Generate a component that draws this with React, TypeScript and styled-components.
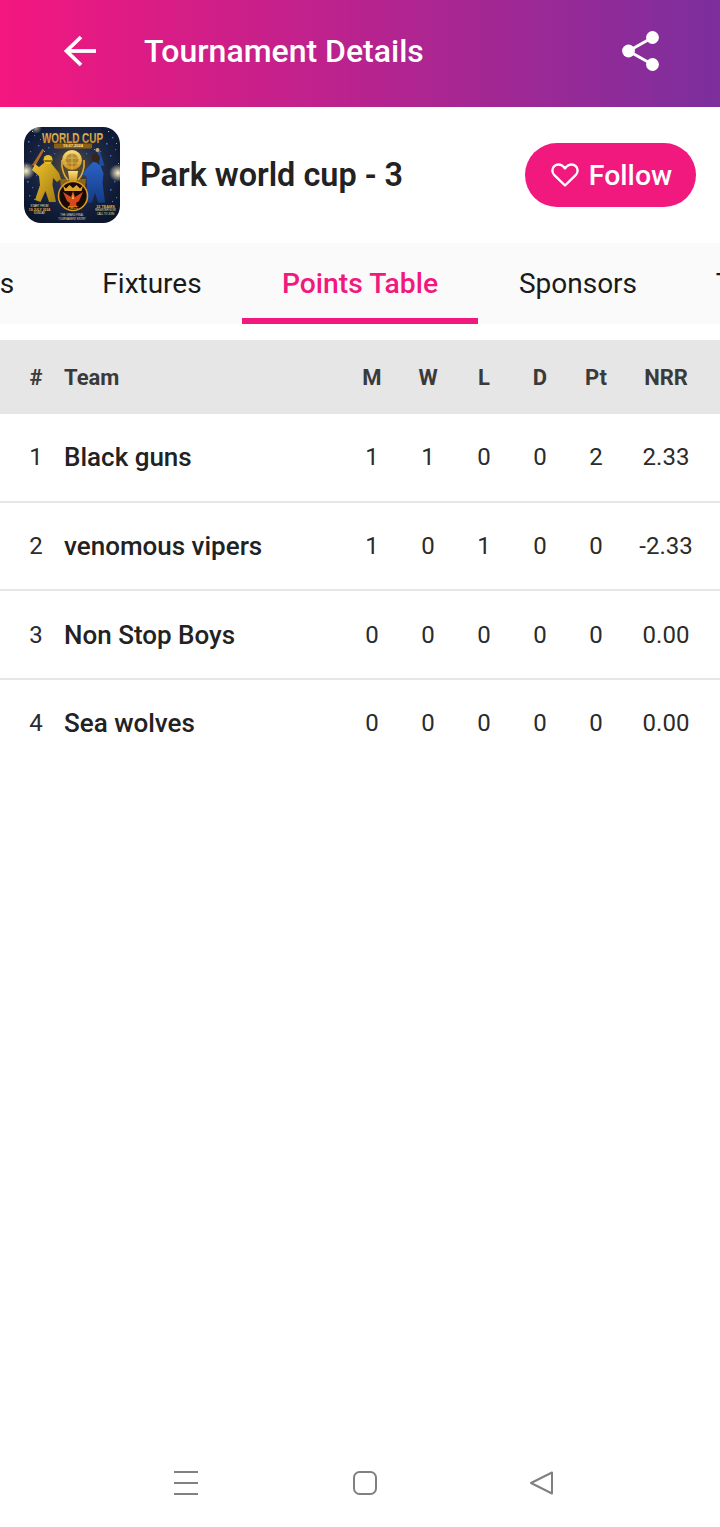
import * as React from 'react';
import styled, { createGlobalStyle } from 'styled-components';

const tabs = [
  { label: 'Matches', width: 204 },
  { label: 'Fixtures', width: 180 },
  { label: 'Points Table', width: 236, active: true },
  { label: 'Sponsors', width: 200 },
  { label: 'Teams', width: 160 },
];

const columns = ['M', 'W', 'L', 'D', 'Pt', 'NRR'];

const teams = [
  { name: 'Black guns', stats: ['1', '1', '0', '0', '2', '2.33'] },
  { name: 'venomous vipers', stats: ['1', '0', '1', '0', '0', '-2.33'] },
  { name: 'Non Stop Boys', stats: ['0', '0', '0', '0', '0', '0.00'] },
  { name: 'Sea wolves', stats: ['0', '0', '0', '0', '0', '0.00'] },
];

// confetti specks of the poster: x, y, size
const blueSpecks = [
  [4, 14, 1.6], [10, 8, 1.2], [14, 18, 1.4], [6, 24, 1.2], [88, 10, 1.4], [82, 16, 1.6],
  [91, 22, 1.2], [86, 28, 1.4], [76, 24, 1.2], [30, 26, 1.2], [24, 20, 1.4], [62, 26, 1.2],
  [3, 54, 1.6], [8, 60, 1.2], [5, 68, 1.4], [90, 54, 1.4], [86, 62, 1.6], [92, 70, 1.2],
  [58, 47, 1.1], [34, 50, 1.1], [60, 58, 1.2], [88, 42, 1.2], [12, 48, 1.2],
];
const goldSpecks = [
  [8, 4, 1], [20, 24, 0.9], [84, 4, 1.1], [92, 16, 0.9], [70, 22, 0.9], [16, 12, 0.8],
  [2, 38, 0.9], [94, 36, 0.9], [28, 46, 0.8], [64, 50, 0.8], [10, 72, 0.8], [88, 74, 0.8],
];

const TournamentArt = () => (
  <svg width="96" height="96" viewBox="0 0 96 96">
    <defs>
      <radialGradient id="sky" cx="50%" cy="42%" r="72%">
        <stop offset="0%" stopColor="#6a5526" />
        <stop offset="32%" stopColor="#27304a" />
        <stop offset="70%" stopColor="#101c38" />
        <stop offset="100%" stopColor="#0a1224" />
      </radialGradient>
      <radialGradient id="flare">
        <stop offset="0%" stopColor="#fff3c8" />
        <stop offset="100%" stopColor="#fff3c8" stopOpacity="0" />
      </radialGradient>
      <linearGradient id="gold" x1="0" y1="0" x2="0" y2="1">
        <stop offset="0%" stopColor="#fbe07a" />
        <stop offset="100%" stopColor="#c98a1c" />
      </linearGradient>
      <linearGradient id="kit" x1="0" y1="0" x2="1" y2="1">
        <stop offset="0%" stopColor="#f0c52c" />
        <stop offset="100%" stopColor="#9b7410" />
      </linearGradient>
      <linearGradient id="blueKit" x1="0" y1="0" x2="0" y2="1">
        <stop offset="0%" stopColor="#2a63c4" />
        <stop offset="100%" stopColor="#143a86" />
      </linearGradient>
    </defs>
    <rect width="96" height="96" fill="url(#sky)" />
    <circle cx="2" cy="44" r="9" fill="url(#flare)" />
    <circle cx="94" cy="46" r="9" fill="url(#flare)" />
    <circle cx="12" cy="1" r="6" fill="url(#flare)" opacity="0.6" />
    {blueSpecks.map(([x, y, s]) => (
      <rect key={`${x}-${y}`} x={x} y={y} width={s} height={s} fill="#2f78e0" />
    ))}
    {goldSpecks.map(([x, y, s]) => (
      <rect key={`${x}-${y}`} x={x} y={y} width={s} height={s} fill="#f0c040" />
    ))}

    <text x="48.500" y="15.500" textAnchor="middle" fontFamily="'Liberation Sans', sans-serif" fontSize="15" fontWeight="700" fill="url(#gold)" stroke="#7a4c0c" strokeWidth="0.250" textLength="61" lengthAdjust="spacingAndGlyphs">WORLD CUP</text>
    <rect x="30" y="16.500" width="38" height="5" rx="1" fill="#8a5f16" />
    <text x="49" y="20.400" textAnchor="middle" fontFamily="'Liberation Sans', sans-serif" fontSize="4" fontWeight="700" fill="#ffe9a0">19.07.2024</text>

    {/* trophy */}
    <path d="M36 52h26l-2 16H38z" fill="#8d6316" />
    <path d="M38 33c-1 8 2 16 6 20M60 33c1 8-2 16-6 20" stroke="#e2ac32" strokeWidth="1.600" fill="none" />
    <path d="M44 44h10l-1.500 12h-7z" fill="url(#gold)" />
    <circle cx="48" cy="33" r="10" fill="url(#gold)" />
    <circle cx="48" cy="33" r="6.500" fill="#8a5f16" opacity="0.55" />
    <path d="M40 31h16M41 36h14M48 24v18" stroke="#f6d873" strokeWidth="0.500" />

    {/* yellow batter */}
    <path d="M7 38l1.800-1 9.500-15 2 1.100-9 15.900z" fill="#b06a2c" />
    <path d="M11 37l4 3 6-5 6 1 8 10 2 6-4 3-4-4-.500 7 3.500 17h-7l-3.500-11-5 11-5.500-2 5-15-1-9-7-6z" fill="url(#kit)" />
    <circle cx="24" cy="32.500" r="4.500" fill="#e9bd24" />
    <path d="M20 33h9l-1 2h-7z" fill="#8a6a10" />

    {/* blue bowler */}
    <path d="M62 42l7-7 3 .500 4.500 3 3 8-1 9 2.500 20h-7l-3-10-3 10h-6l1-17-.500-9-3.500-2z" fill="url(#blueKit)" />
    <path d="M76 39l-3-15 2.500-.500 5 15z" fill="#1d4fa3" />
    <circle cx="72" cy="31" r="4" fill="#3a2418" />
    <circle cx="73.500" cy="23" r="2" fill="#c9a878" />

    {/* emblem */}
    <circle cx="49" cy="69" r="14.500" fill="#180b05" stroke="#d79a26" strokeWidth="1.600" />
    <path d="M39 58.500l3 3 3.500-3.500 3.500 3 3.500-3 3.500 3.500 3-3-1.500 5.500H40.500z" fill="#e0a52c" />
    <path d="M49 64l2 6 8-5-4 9-3 2 1 4h-8l1-4-3-2-4-9 8 5z" fill="#d8481c" />
    <path d="M49 66l1 6h-2z" fill="#f5c23c" />
    <text x="49" y="81.500" textAnchor="middle" fontFamily="'Liberation Sans', sans-serif" fontSize="3.400" fontWeight="700" fill="#e0a52c">PWCC</text>

    {/* side captions */}
    <text x="15.500" y="79.500" textAnchor="middle" fontFamily="'Liberation Sans', sans-serif" fontSize="2.800" fill="#f3e3b0">START FROM</text>
    <text x="15.500" y="83.500" textAnchor="middle" fontFamily="'Liberation Sans', sans-serif" fontSize="3.400" fontWeight="700" fill="#e8b83a">19 JULY 2024</text>
    <text x="15.500" y="87" textAnchor="middle" fontFamily="'Liberation Sans', sans-serif" fontSize="2.800" fill="#f3e3b0">SUNDAY</text>
    <text x="81.500" y="80.500" textAnchor="middle" fontFamily="'Liberation Sans', sans-serif" fontSize="3.800" fontWeight="700" fill="#e8b83a">32 TEAMS</text>
    <text x="81.500" y="84" textAnchor="middle" fontFamily="'Liberation Sans', sans-serif" fontSize="2.600" fill="#f3e3b0">REGISTER NOW</text>
    <text x="81.500" y="87.500" textAnchor="middle" fontFamily="'Liberation Sans', sans-serif" fontSize="2.600" fill="#f3e3b0">CALL TO JOIN</text>
    <text x="48" y="88.500" textAnchor="middle" fontFamily="'Liberation Sans', sans-serif" fontSize="2.600" fill="#e6d8a8">THE GRAND FINAL</text>
    <text x="48" y="92.500" textAnchor="middle" fontFamily="'Liberation Sans', sans-serif" fontSize="2.600" fill="#e6d8a8">TOURNAMENT ENTRY</text>
  </svg>
);

const App = () => (
  <Page>
    <GlobalStyle />
    <AppBar>
      <IconSlot>
        <svg width="34" height="32" viewBox="0 0 34 32" fill="none" stroke="#fff" strokeWidth="3.800">
          <path d="M33 16H4" />
          <path d="M18 2 3.500 16 18 30" />
        </svg>
      </IconSlot>
      <Title>Tournament Details</Title>
      <ShareSlot>
        <svg width="38" height="40" viewBox="0 0 38 40" fill="#fff">
          <circle cx="30.500" cy="6.500" r="6.400" />
          <circle cx="6.500" cy="20" r="6.400" />
          <circle cx="30.500" cy="33.500" r="6.400" />
          <path d="M6.500 20 30.500 6.500M6.500 20l24 13.500" stroke="#fff" strokeWidth="3" />
        </svg>
      </ShareSlot>
    </AppBar>

    <Summary>
      <Logo>
        <TournamentArt />
      </Logo>
      <Name>Park world cup - 3</Name>
      <FollowButton>
        <svg width="28" height="24" viewBox="0 0 28 24" fill="none" stroke="#fff" strokeWidth="2.400" strokeLinejoin="round">
          <path d="M14 22.500 3.400 12.200C.6 9.400.8 5.200 3.400 3 6 .8 10 1 12.300 3.500L14 5.400l1.700-1.900C18 1 22 .8 24.600 3c2.600 2.200 2.800 6.400 0 9.200z" />
        </svg>
        Follow
      </FollowButton>
    </Summary>

    <TabStrip>
      <TabTrack>
        {tabs.map((tab) => (
          <Tab key={tab.label} $width={tab.width} $active={tab.active}>
            {tab.label}
          </Tab>
        ))}
      </TabTrack>
    </TabStrip>

    <Table>
      <HeadRow>
        <HeadCell>#</HeadCell>
        <HeadTeam>Team</HeadTeam>
        {columns.map((col) => (
          <HeadCell key={col}>{col}</HeadCell>
        ))}
      </HeadRow>
      {teams.map((team, i) => (
        <Row key={team.name} $last={i === teams.length - 1}>
          <Cell>{i + 1}</Cell>
          <TeamCell>{team.name}</TeamCell>
          {team.stats.map((value, j) => (
            <Cell key={j}>{value}</Cell>
          ))}
        </Row>
      ))}
    </Table>

    <NavBar>
      <svg width="24" height="24" viewBox="0 0 24 24" stroke="#808080" strokeWidth="2">
        <path d="M0 1h24M0 12h24M0 23h24" />
      </svg>
      <svg width="24" height="24" viewBox="0 0 24 24" fill="none" stroke="#808080" strokeWidth="2">
        <rect x="1" y="1" width="22" height="22" rx="5.500" />
      </svg>
      <svg width="24" height="24" viewBox="0 0 24 24" fill="none" stroke="#808080" strokeWidth="2" strokeLinejoin="round">
        <path d="M22 1.500v21L1 12z" />
      </svg>
    </NavBar>
  </Page>
);

const GlobalStyle = createGlobalStyle`
  html, body {
    margin: 0;
    padding: 0;
    background: #fff;
  }
  * {
    box-sizing: border-box;
  }
`;

const Page = styled.div`
  width: 720px;
  height: 1527px;
  display: flex;
  flex-direction: column;
  overflow: hidden;
  background: #fff;
  font-family: Roboto, 'Liberation Sans', sans-serif;
`;

const AppBar = styled.header`
  height: 107px;
  flex: none;
  display: flex;
  align-items: center;
  padding: 0 60px 5px 63px;
  background: linear-gradient(90deg, #f4177f 0%, #7c2f9d 100%);
  color: #fff;
`;

const IconSlot = styled.div`
  width: 81px;
  display: flex;
  align-items: center;
`;

const ShareSlot = styled.div`
  display: flex;
  align-items: center;
`;

const Title = styled.h1`
  flex: 1;
  margin: 0;
  font-size: 32px;
  font-weight: 500;
`;

const Summary = styled.section`
  height: 136px;
  flex: none;
  display: flex;
  align-items: center;
  padding: 0 24px;
`;

const Logo = styled.div`
  width: 96px;
  height: 96px;
  flex: none;
  border-radius: 17px;
  overflow: hidden;
  svg {
    display: block;
  }
`;

const Name = styled.h2`
  flex: 1;
  margin: 0 0 0 20px;
  font-size: 32.400px;
  font-weight: 600;
  color: #222;
`;

const FollowButton = styled.button`
  width: 171px;
  height: 64px;
  display: flex;
  align-items: center;
  justify-content: center;
  gap: 10px;
  padding: 0 0 0 2px;
  border: 0;
  border-radius: 32px;
  background: #f1187e;
  color: #fff;
  font-family: inherit;
  font-size: 28.500px;
  font-weight: 500;
`;

const TabStrip = styled.nav`
  height: 81px;
  flex: none;
  overflow: hidden;
  background: #fafafa;
`;

const TabTrack = styled.div`
  display: flex;
  height: 100%;
  margin-left: -142px;
`;

const Tab = styled.div<{ $width: number; $active?: boolean }>`
  flex: 0 0 ${(p) => p.$width}px;
  display: flex;
  align-items: center;
  justify-content: center;
  box-shadow: ${(p) => (p.$active ? 'inset 0 -6px 0 #f1187e' : 'none')};
  font-size: ${(p) => (p.$active ? 28.3 : 28)}px;
  font-weight: ${(p) => (p.$active ? 500 : 400)};
  color: ${(p) => (p.$active ? '#f1187e' : '#1a1a1a')};
`;

const Table = styled.section`
  margin-top: 16px;
  flex: 1;
`;

const gridColumns = '56px 280px repeat(5, 56px) 84px';

const HeadRow = styled.div`
  height: 74px;
  display: grid;
  grid-template-columns: ${gridColumns};
  align-items: center;
  padding-left: 8px;
  background: #e6e6e6;
`;

const HeadCell = styled.div`
  text-align: center;
  font-size: 22px;
  font-weight: 700;
  color: #3a3a3a;
`;

const HeadTeam = styled(HeadCell)`
  text-align: left;
`;

const Row = styled.div<{ $last?: boolean }>`
  height: 88.670px;
  display: grid;
  grid-template-columns: ${gridColumns};
  align-items: center;
  padding-left: 8px;
  border-bottom: 2px solid ${(p) => (p.$last ? 'transparent' : '#e6e6e6')};
`;

const Cell = styled.div`
  text-align: center;
  font-size: 24px;
  font-weight: 450;
  color: #2b2b2b;
`;

const TeamCell = styled(Cell)`
  text-align: left;
  font-size: 26px;
  font-weight: 480;
  color: #222;
`;

const NavBar = styled.footer`
  height: 88px;
  flex: none;
  display: grid;
  grid-template-columns: 179px 177px 24px;
  align-items: center;
  padding-left: 174px;
  svg {
    display: block;
  }
`;

export default App;
